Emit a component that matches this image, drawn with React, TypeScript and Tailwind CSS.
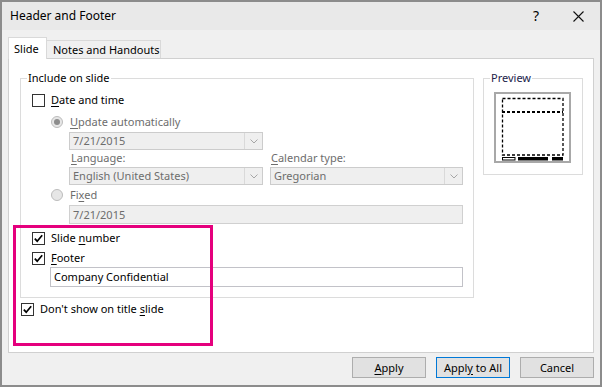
import React from "react";

function Check({ checked = false }: { checked?: boolean }) {
  return (
    <span className="w-[13px] h-[13px] border border-[#333333] bg-white flex items-center justify-center shrink-0">
      {checked && (
        <svg width="11" height="11" viewBox="0 0 11 11">
          <polyline points="1.8,5.6 4.2,8.2 9.2,2.2" fill="none" stroke="#000" strokeWidth="1.7" />
        </svg>
      )}
    </span>
  );
}

function Radio({ selected = false }: { selected?: boolean }) {
  return (
    <span className="w-[12px] h-[12px] rounded-full border border-[#bcbcbc] bg-[#e6e6e6] flex items-center justify-center shrink-0">
      {selected && <span className="w-[6px] h-[6px] rounded-full bg-[#8c8c8c]" />}
    </span>
  );
}

function Combo({ value, width }: { value: string; width: string }) {
  return (
    <div className={`${width} h-[18px] border border-[#cccccc] bg-[#efefef] flex items-center text-[#6d6d6d]`}>
      <span className="flex-1 pl-[3px] leading-4 whitespace-nowrap">{value}</span>
      <span className="w-[18px] h-full border-l border-[#d9d9d9] flex items-center justify-center">
        <svg width="8" height="5" viewBox="0 0 8 5">
          <polyline points="0.5,0.5 4,4 7.5,0.5" fill="none" stroke="#a6a6a6" strokeWidth="1" />
        </svg>
      </span>
    </div>
  );
}

function Button({ children, primary = false }: { children: React.ReactNode; primary?: boolean }) {
  return (
    <button
      className={`w-[74px] h-[21px] bg-[#e1e1e1] border flex items-center justify-center leading-4 ${
        primary ? "border-[#0078d7]" : "border-[#adadad]"
      }`}
    >
      <span className="whitespace-nowrap">{children}</span>
    </button>
  );
}

export default function App() {
  return (
    <div
      className="relative w-[602px] h-[387px] overflow-hidden border-2 border-[#8c8c8c] bg-[#f0f0f0] flex flex-col text-[11px] text-black"
      style={{ fontFamily: '"Noto Sans", "Open Sans", sans-serif' }}
    >
      {/* title bar */}
      <div className="h-[28px] shrink-0 bg-[#e9e9e9] flex items-center pl-[8px]">
        <span className="leading-4 text-[12px]">Header and Footer</span>
        <span className="ml-auto text-[14px] leading-4 mr-[34px]">?</span>
        <svg className="mr-[16px]" width="11" height="11" viewBox="0 0 11 11">
          <path d="M0.5 0.5 L10.5 10.5 M10.5 0.5 L0.5 10.5" stroke="#111" strokeWidth="1.1" />
        </svg>
      </div>

      <div className="flex flex-col px-[6px] pt-[7px]">
        {/* tabs */}
        <div className="flex items-end h-[21px]">
          <div className="relative z-10 h-[22px] -mb-px w-[39px] bg-white border border-b-0 border-[#d9d9d9] flex items-start pl-[5px] pt-[3px] leading-4">
            Slide
          </div>
          <div className="h-[18px] w-[114px] bg-[#f0f0f0] border border-l-0 border-b-0 border-[#d9d9d9] flex items-center pl-[6px] leading-4 whitespace-nowrap">
            Notes and Handouts
          </div>
        </div>

        {/* panel */}
        <div className="h-[295px] bg-white border border-[#d0d0d0] flex flex-col pl-[11px]">
          <div className="flex items-start mt-[11px]">
            <fieldset className="w-[454px] h-[228px] border border-[#dcdcdc] flex flex-col">
              <legend className="ml-[6px] px-[1px] leading-4">Include on slide</legend>

              <div className="flex items-center h-[16px] mt-[6px] pl-[11px] gap-[6px]">
                <Check />
                <span className="leading-4">
                  <u className="underline-offset-2">D</u>ate and time
                </span>
              </div>

              <div className="flex items-center h-[16px] mt-[6px] pl-[30px] gap-[7px] text-[#6d6d6d]">
                <Radio selected />
                <span className="leading-4">
                  <u className="underline-offset-2">U</u>pdate automatically
                </span>
              </div>

              <div className="pl-[48px] mt-[2px]">
                <Combo value="7/21/2015" width="w-[194px]" />
              </div>

              <div className="pl-[48px] flex gap-[7px]">
                <div className="flex flex-col">
                  <span className="h-[16px] leading-4 pl-[2px] text-[#6d6d6d]">
                    <u className="underline-offset-2">L</u>anguage:
                  </span>
                  <div className="mt-[1px]">
                    <Combo value="English (United States)" width="w-[194px]" />
                  </div>
                </div>
                <div className="flex flex-col">
                  <span className="h-[16px] leading-4 pl-[1px] text-[#6d6d6d]">
                    <u className="underline-offset-2">C</u>alendar type:
                  </span>
                  <div className="mt-[1px]">
                    <Combo value="Gregorian" width="w-[193px]" />
                  </div>
                </div>
              </div>

              <div className="flex items-center h-[16px] mt-[2px] pl-[30px] gap-[7px] text-[#6d6d6d]">
                <Radio />
                <span className="leading-4">
                  Fi<u className="underline-offset-2">x</u>ed
                </span>
              </div>

              <div className="pl-[48px] mt-[2px]">
                <div className="w-[394px] h-[19px] border border-[#d0d0d0] bg-[#efefef] flex items-center pl-[3px] text-[#6d6d6d] leading-4">
                  7/21/2015
                </div>
              </div>

              <div className="flex items-center h-[16px] mt-[6px] pl-[11px] gap-[6px]">
                <Check checked />
                <span className="leading-4">
                  Slide <u className="underline-offset-2">n</u>umber
                </span>
              </div>

              <div className="flex items-center h-[16px] mt-[4px] pl-[11px] gap-[6px]">
                <Check checked />
                <span className="leading-4">
                  <u className="underline-offset-2">F</u>ooter
                </span>
              </div>

              <div className="pl-[29px] mt-[1px]">
                <div className="w-[413px] h-[20px] border border-[#c2c2c8] bg-white flex items-center pl-[3px] leading-4">
                  Company Confidential
                </div>
              </div>
            </fieldset>

            <fieldset className="ml-[9px] w-[100px] h-[105px] border border-[#dcdcdc] flex flex-col">
              <legend className="ml-[6px] px-[1px] leading-4 text-[#22224a]">Preview</legend>
              <div className="ml-[10px] mt-[6px] w-[77px] h-[71px] border-2 border-[#a8a8a8] bg-white">
                <svg width="73" height="67" viewBox="0 0 73 67">
                  <rect x="6.5" y="4.5" width="60.5" height="56.5" fill="none" stroke="#000" strokeWidth="1.3" strokeDasharray="3 2" />
                  <line x1="6" y1="18" x2="67" y2="18" stroke="#000" strokeWidth="2" strokeDasharray="3 2" />
                  <rect x="6.5" y="63.5" width="12.5" height="2.5" fill="none" stroke="#000" strokeWidth="1" />
                  <rect x="22" y="63" width="30" height="3.5" fill="#000" />
                  <rect x="56" y="63" width="11" height="3.5" fill="#000" />
                </svg>
              </div>
            </fieldset>
          </div>

          <div className="flex items-center h-[16px] mt-[3px] pl-[1px] gap-[6px]">
            <Check checked />
            <span className="leading-4">
              Don't show on title <u className="underline-offset-2">s</u>lide
            </span>
          </div>
        </div>

        {/* buttons */}
        <div className="flex justify-end gap-[10px] mt-[4px]">
          <Button>
            <u className="underline-offset-2">A</u>pply
          </Button>
          <Button primary>
            Appl<u className="underline-offset-2">y</u> to All
          </Button>
          <Button>Cancel</Button>
        </div>
      </div>

      {/* annotation highlight */}
      <div className="absolute left-[11px] top-[223px] w-[200px] h-[121px] border-[3px] border-[#e5007d] pointer-events-none" />
    </div>
  );
}
